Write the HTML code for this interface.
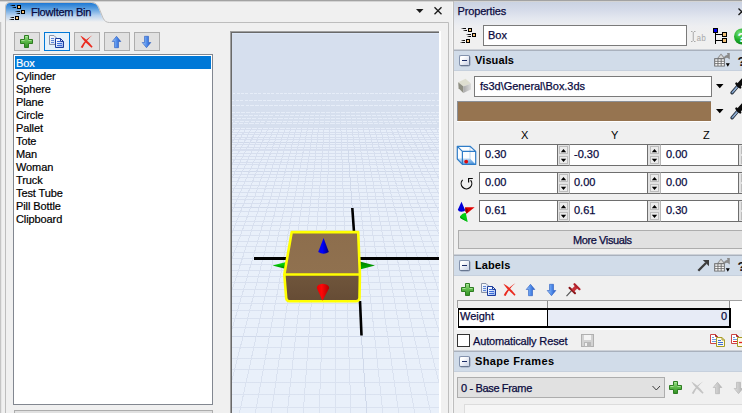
<!DOCTYPE html>
<html>
<head>
<meta charset="utf-8">
<title>FlowItem Bin</title>
<style>
html,body{margin:0;padding:0;}
body{width:742px;height:413px;overflow:hidden;position:relative;background:#f0f0f0;font-family:"Liberation Sans","DejaVu Sans",sans-serif;font-size:11px;color:#000;}
.abs{position:absolute;}
.t{position:absolute;white-space:nowrap;line-height:13px;height:13px;}
.nv{color:#0a0a3e;-webkit-text-stroke:0.25px #0a0a3e;}
/* buttons */
.tbtn{position:absolute;top:32px;width:24px;height:17px;border:1px solid #adadad;background:#e1e1e1;}
.tbtn.hot{border-color:#0078d7;background:#e5f1fb;}
/* list */
#list{left:13px;top:54px;width:198px;height:349px;border:1px solid #828790;background:#fff;}
#list div{position:absolute;left:1px;width:196px;height:13px;line-height:13px;white-space:nowrap;}
#list div span{position:absolute;left:1px;top:1px;letter-spacing:-0.1px;-webkit-text-stroke:0.2px currentColor;}
#list div.sel{background:#0078d7;color:#fff;}
#box2{left:14px;top:410px;width:197px;height:3px;border:1px solid #adadad;border-bottom:none;background:#e1e1e1;}
/* props */
#props{left:454px;top:2px;width:288px;height:411px;background:linear-gradient(#cad2e2 0,#d5dbe9 8px,#e3e7ef 16px,#edeef1 24px,#f0f0f0 31px,#f0f0f0 100%);}
.hdr{position:absolute;left:454px;width:288px;height:22px;background:#d1dce9;border-top:1px solid #a9b1bd;border-bottom:1px solid #c6d0dd;box-sizing:border-box;margin-top:1px;height:21px;box-shadow:0 -1px 0 #cdd1d7;}
.hdr b{position:absolute;left:21px;top:3px;font-size:11px;font-weight:bold;line-height:13px;white-space:nowrap;letter-spacing:0.1px;}
.minus{position:absolute;left:5px;top:4px;width:9px;height:9px;border:1px solid #8392ad;border-bottom-color:#66758f;border-right-color:#66758f;border-radius:2px;background:linear-gradient(135deg,#ffffff 25%,#c8d0e4);box-shadow:0.5px 0.5px 0 rgba(110,125,155,0.6);}
.minus i{position:absolute;left:2px;top:4px;width:5px;height:1px;background:#1c2c66;}
.inp{position:absolute;box-sizing:border-box;border:1px solid #6e6e6e;background:#fff;height:22px;white-space:nowrap;}
.inp span{position:absolute;left:5px;top:3px;line-height:13px;color:#0a0a3e;-webkit-text-stroke:0.25px #0a0a3e;}
.spin{position:absolute;width:9px;height:18px;}
.spin i{position:absolute;left:0;width:7px;height:6px;border:1px solid #bdbdbd;background:#ebebeb;}
</style>
</head>
<body>
<!-- window chrome lines -->
<div class="abs" style="left:0;top:0;width:742px;height:1px;background:#a2a2a2;"></div>
<div class="abs" style="left:0;top:1px;width:742px;height:1px;background:#d4d4d4;"></div>
<div class="abs" style="left:0;top:22px;width:1px;height:391px;background:#c4c4c4;"></div>
<div class="abs" style="left:1px;top:22px;width:1px;height:391px;background:#e6e6e6;"></div>
<div class="abs" style="left:452px;top:2px;width:1px;height:411px;background:#f6f6f6;"></div>
<div class="abs" style="left:453px;top:1px;width:1px;height:412px;background:#bebebe;"></div>

<!-- tab strip -->
<svg class="abs" style="left:0;top:0" width="453" height="413" viewBox="0 0 453 413">
  <defs>
    <linearGradient id="tg" x1="0" y1="3" x2="0" y2="22" gradientUnits="userSpaceOnUse">
      <stop offset="0" stop-color="#1d78d4"/>
      <stop offset="0.3" stop-color="#5a9fe0"/>
      <stop offset="0.65" stop-color="#b4d0ee"/>
      <stop offset="1" stop-color="#f0f0f0"/>
    </linearGradient>
  </defs>
  <path d="M6 22.500V7Q6 3 10 3H91.500Q96.500 3 98.500 8L102.500 18Q104.500 22.500 109.500 22.500Z" fill="url(#tg)"/>
  <path d="M5.500 413V7Q5.500 2.500 10 2.500H91.500Q97 2.500 99 8L103 18Q105 22.500 109.500 22.500H448.500V413" fill="none" stroke="#bdbdbd" stroke-width="1"/>
  <!-- tab icon -->
  <g shape-rendering="crispEdges">
    <rect x="17" y="5" width="4" height="4" fill="#000"/><rect x="18" y="6" width="2" height="2" fill="#f6c37a"/>
    <rect x="21" y="10" width="4" height="4" fill="#000"/><rect x="22" y="11" width="2" height="2" fill="#f6c37a"/>
    <rect x="15" y="16" width="4" height="4" fill="#000"/><rect x="16" y="17" width="2" height="2" fill="#f6c37a"/>
  </g>
  <defs><linearGradient id="mo" x1="0" y1="0" x2="1" y2="0"><stop offset="0" stop-color="#000" stop-opacity="0.1"/><stop offset="0.5" stop-color="#000" stop-opacity="0.9"/><stop offset="1" stop-color="#000"/></linearGradient></defs>
  <g fill="url(#mo)">
    <rect x="10" y="5" width="5" height="1"/><rect x="12" y="7" width="4" height="1"/>
    <rect x="15" y="11" width="5" height="1"/><rect x="16" y="13" width="4" height="1"/>
    <rect x="10" y="17" width="4" height="1"/><rect x="9" y="19" width="5" height="1"/>
  </g>
  <!-- panel menu arrow and close -->
  <path d="M416 9H423.500L419.750 13Z" fill="#1a1a1a"/>
  <path d="M434.500 7.200L441.500 14.200M441.500 7.200L434.500 14.200" stroke="#1a1a1a" stroke-width="1.300" fill="none"/>
</svg>
<div class="t nv" style="left:31px;top:6px;letter-spacing:-0.3px;">FlowItem Bin</div>

<!-- toolbar buttons -->
<div class="tbtn" style="left:14px"></div>
<div class="tbtn hot" style="left:44px"></div>
<div class="tbtn" style="left:74px"></div>
<div class="tbtn" style="left:104px"></div>
<div class="tbtn" style="left:134px"></div>

<!-- list -->
<div class="abs" id="list">
  <div class="sel" style="top:1px"><span>Box</span></div>
  <div style="top:14px"><span>Cylinder</span></div>
  <div style="top:27px"><span>Sphere</span></div>
  <div style="top:40px"><span>Plane</span></div>
  <div style="top:53px"><span>Circle</span></div>
  <div style="top:66px"><span>Pallet</span></div>
  <div style="top:79px"><span>Tote</span></div>
  <div style="top:92px"><span>Man</span></div>
  <div style="top:105px"><span>Woman</span></div>
  <div style="top:118px"><span>Truck</span></div>
  <div style="top:131px"><span>Test Tube</span></div>
  <div style="top:144px"><span>Pill Bottle</span></div>
  <div style="top:157px"><span>Clipboard</span></div>
</div>
<div class="abs" id="box2"></div>

<!-- 3D view frame -->
<div class="abs" style="left:230px;top:31px;width:211px;height:382px;background:#fff;"></div>
<div class="abs" style="left:230px;top:31px;width:209px;height:382px;background:#a0a0a0;"></div>
<div class="abs" style="left:231px;top:32px;width:208px;height:381px;background:#696969;"></div>
<svg class="abs" style="left:232px;top:33px" width="207" height="380" viewBox="232 33 207 380">
<defs><linearGradient id="floorg" x1="0" y1="92" x2="0" y2="413" gradientUnits="userSpaceOnUse"><stop offset="0" stop-color="#e7eef9"/><stop offset="0.4" stop-color="#e9f0fa"/><stop offset="1" stop-color="#e9f0fa"/></linearGradient></defs>
<defs><linearGradient id="lineg" x1="0" y1="128" x2="0" y2="413" gradientUnits="userSpaceOnUse"><stop offset="0" stop-color="#d6deee"/><stop offset="0.35" stop-color="#d8e0ef"/><stop offset="1" stop-color="#dae2f0"/></linearGradient></defs>
<rect x="232" y="33" width="207" height="380" fill="#d6dfee"/>
<rect x="232" y="33" width="207" height="1" fill="#dce6f6"/>
<rect x="232" y="128" width="207" height="285" fill="url(#floorg)"/>
<path d="M232 93h207v1h-207zM232 100h207v1h-207zM232 105h207v1h-207zM232 112h207v1h-207zM232 115h207v1h-207zM232 118h207v1h-207zM232 121h207v1h-207zM232 123h207v1h-207z" fill="#e6edf8" shape-rendering="crispEdges"/>
<path d="M232 129h207v1h-207zM232 132h207v1h-207zM232 134h207v1h-207zM232 137h207v1h-207zM232 139h207v1h-207zM232 142h207v1h-207zM232 144h207v1h-207zM232 147h207v1h-207zM232 149h207v2h-207zM232 153h207v1h-207zM232 156h207v1h-207zM232 159h207v1h-207zM232 162h207v1h-207zM232 164h207v1h-207zM232 168h207v1h-207zM232 171h207v1h-207zM232 174h207v1h-207zM232 177h207v1h-207zM232 181h207v1h-207zM232 185h207v1h-207zM232 188h207v1h-207zM232 192h207v1h-207zM232 196h207v1h-207zM232 199h207v1h-207zM232 203h207v1h-207zM232 207h207v1h-207zM232 211h207v1h-207zM232 216h207v1h-207zM232 221h207v1h-207zM232 225h207v1h-207zM232 230h207v1h-207zM232 235h207v1h-207zM232 241h207v1h-207zM232 246h207v1h-207zM232 252h207v1h-207zM232 258h207v1h-207zM232 264h207v1h-207zM232 270h207v1h-207zM232 276h207v1h-207zM232 282h207v1h-207zM232 289h207v1h-207zM232 296h207v1h-207zM232 303h207v1h-207zM232 310h207v1h-207zM232 318h207v1h-207zM232 327h207v1h-207zM232 336h207v1h-207zM232 347h207v1h-207zM232 358h207v1h-207zM232 369h207v1h-207zM232 382h207v1h-207zM232 394h207v1h-207zM232 407h207v1h-207z" fill="url(#lineg)" shape-rendering="crispEdges"/>
<path d="M232 142h207v1h-207zM232 171h207v1h-207zM232 207h207v1h-207zM232 336h207v1h-207z" fill="#d0d9ea" shape-rendering="crispEdges"/>
<path d="M235.1 128.0L48.1 413M240.7 128.0L64.0 413M246.2 128.0L80.0 413M251.8 128.0L95.9 413M257.4 128.0L111.9 413M262.9 128.0L127.8 413M268.5 128.0L143.7 413M274.1 128.0L159.7 413M279.7 128.0L175.6 413M285.2 128.0L191.6 413M290.8 128.0L207.5 413M296.4 128.0L223.5 413M301.9 128.0L239.4 413M307.5 128.0L255.3 413M313.1 128.0L271.3 413M318.6 128.0L287.2 413M324.2 128.0L303.2 413M329.8 128.0L319.1 413M335.3 128.0L335.1 413M340.9 128.0L351.0 413M346.5 128.0L366.9 413M352.1 128.0L382.9 413M357.6 128.0L398.8 413M363.2 128.0L414.8 413M368.8 128.0L430.7 413M374.3 128.0L446.7 413M379.9 128.0L462.6 413M385.5 128.0L478.6 413M391.0 128.0L494.5 413M396.6 128.0L510.4 413M402.2 128.0L526.4 413M407.7 128.0L542.3 413M413.3 128.0L558.3 413M418.9 128.0L574.2 413M424.5 128.0L590.2 413M430.0 128.0L606.1 413M435.6 128.0L622.0 413" stroke="url(#lineg)" stroke-width="1" fill="none" shape-rendering="crispEdges"/>
<path d="M233.2 92L201.7 128M237.4 92L207.3 128M241.7 92L212.8 128M245.9 92L218.4 128M250.2 92L224.0 128M254.5 92L229.5 128M258.7 92L235.1 128M263.0 92L240.7 128M267.2 92L246.2 128M271.5 92L251.8 128M275.8 92L257.4 128M280.0 92L262.9 128M284.3 92L268.5 128M288.5 92L274.1 128M292.8 92L279.7 128M297.1 92L285.2 128M301.3 92L290.8 128M305.6 92L296.4 128M309.8 92L301.9 128M314.1 92L307.5 128M318.3 92L313.1 128M322.6 92L318.6 128M326.9 92L324.2 128M331.1 92L329.8 128M335.4 92L335.3 128M339.6 92L340.9 128M343.9 92L346.5 128M348.2 92L352.1 128M352.4 92L357.6 128M356.7 92L363.2 128M360.9 92L368.8 128M365.2 92L374.3 128M369.5 92L379.9 128M373.7 92L385.5 128M378.0 92L391.0 128M382.2 92L396.6 128M386.5 92L402.2 128M390.7 92L407.7 128M395.0 92L413.3 128M399.3 92L418.9 128M403.5 92L424.5 128M407.8 92L430.0 128M412.0 92L435.6 128M416.3 92L441.2 128M420.6 92L446.7 128M424.8 92L452.3 128M429.1 92L457.9 128M433.3 92L463.4 128M437.6 92L469.0 128" stroke="#d6dfee" stroke-width="1" fill="none" shape-rendering="crispEdges"/>
<path d="M348.1 150L366.9 413" stroke="#d0d9ea" stroke-width="1" fill="none" shape-rendering="crispEdges"/>
<path d="M254 258.500H439" stroke="#000" stroke-width="3" fill="none"/>
<path d="M352.300 208L354 232M360 301L361.500 335.500" stroke="#000" stroke-width="2.600" fill="none"/>
<defs><linearGradient id="gcl" x1="0" y1="0" x2="0" y2="1"><stop offset="0" stop-color="#22e022"/><stop offset="0.45" stop-color="#00c800"/><stop offset="1" stop-color="#006400"/></linearGradient><linearGradient id="bcl" x1="0" y1="0" x2="1" y2="0"><stop offset="0" stop-color="#0808e0"/><stop offset="0.4" stop-color="#0000ff"/><stop offset="1" stop-color="#000078"/></linearGradient><linearGradient id="rcl" x1="0" y1="0" x2="1" y2="0"><stop offset="0" stop-color="#e80000"/><stop offset="0.4" stop-color="#ff0808"/><stop offset="1" stop-color="#b00000"/></linearGradient><linearGradient id="topf" x1="0" y1="0" x2="0" y2="1"><stop offset="0" stop-color="#8d6e4d"/><stop offset="1" stop-color="#90714f"/></linearGradient><linearGradient id="frontf" x1="0" y1="0" x2="0" y2="1"><stop offset="0" stop-color="#70563c"/><stop offset="1" stop-color="#664c35"/></linearGradient></defs>
<defs><linearGradient id="gcr" x1="0" y1="0" x2="0" y2="1"><stop offset="0" stop-color="#007800"/><stop offset="0.5" stop-color="#009a00"/><stop offset="1" stop-color="#00b400"/></linearGradient></defs>
<path d="M272.500 265.500L288 261.500V269.500Z" fill="url(#gcl)"/>
<path d="M375 265.500L358 261V270Z" fill="url(#gcr)"/>
<path d="M291.700 232.100H358.200L359.900 274.500H284.300Z" fill="url(#topf)"/>
<path d="M284.300 274.500H359.900L359.500 298Q359.300 301.200 356 301.200H289.500Q286.400 301.200 286.200 298Z" fill="url(#frontf)"/>
<path d="M291.700 232.100H358.200L359.900 274.500L359.500 298Q359.300 301.200 356 301.200H289.500Q286.400 301.200 286.200 298L284.300 274.500ZM284.300 274.500H359.900" stroke="#ffff00" stroke-width="2.600" fill="none" stroke-linejoin="round"/>
<path d="M323.600 238L318.200 252Q323.500 255.500 328.800 252Z" fill="url(#bcl)"/>
<path d="M322.500 300.800L316.800 288Q317 284.200 322.800 283.700Q328.800 284.200 329.200 288Z" fill="url(#rcl)"/>
</svg>

<!-- properties -->
<div class="abs" id="props"></div>
<div class="t nv" style="left:457.500px;top:5px;letter-spacing:-0.15px;">Properties</div>
<div class="inp" style="left:483px;top:25px;width:204px;height:21px;border-color:#7a7a7a;"><span style="top:3px;left:4px">Box</span></div>

<div class="hdr" style="top:49px"><span class="minus"><i></i></span><b>Visuals</b></div>
<div class="inp" style="left:474px;top:76px;width:238px;height:21px;border-color:#7a7a7a;"><span style="top:3px;left:5px;letter-spacing:-0.04px;">fs3d\General\Box.3ds</span></div>
<div class="abs" style="left:457px;top:101px;width:254px;height:20px;background:#967450;box-sizing:border-box;border-left:1px solid #8b8f96;border-top:1px solid #8b8f96;box-shadow:0 1px 0 #fff;"></div>

<div class="t" style="left:521px;top:129px;">X</div>
<div class="t" style="left:611px;top:129px;">Y</div>
<div class="t" style="left:703px;top:129px;">Z</div>

<div class="abs" style="left:479px;top:144px;width:263px;height:22px;background:#e2e2e2;border-top:1px solid #6e6e6e;border-bottom:1px solid #6e6e6e;box-sizing:border-box;"></div>
<div class="inp" style="left:479px;top:144px;width:79px;"><span style="left:5px">0.30</span></div>
<div class="inp" style="left:569px;top:144px;width:79px;border-left-color:#b8b8b8;"><span style="left:4px">-0.30</span></div>
<div class="inp" style="left:660px;top:144px;width:79px;border-left-color:#b8b8b8;"><span style="left:5px">0.00</span></div>
<div class="spin" style="left:559px;top:146px;"><i style="top:0"></i><i style="top:10px"></i></div>
<div class="spin" style="left:650px;top:146px;"><i style="top:0"></i><i style="top:10px"></i></div>
<div class="spin" style="left:741px;top:146px;"><i style="top:0"></i><i style="top:10px"></i></div>
<div class="abs" style="left:479px;top:172px;width:263px;height:22px;background:#e2e2e2;border-top:1px solid #6e6e6e;border-bottom:1px solid #6e6e6e;box-sizing:border-box;"></div>
<div class="inp" style="left:479px;top:172px;width:79px;"><span style="left:5px">0.00</span></div>
<div class="inp" style="left:569px;top:172px;width:79px;border-left-color:#b8b8b8;"><span style="left:4px">0.00</span></div>
<div class="inp" style="left:660px;top:172px;width:79px;border-left-color:#b8b8b8;"><span style="left:5px">0.00</span></div>
<div class="spin" style="left:559px;top:174px;"><i style="top:0"></i><i style="top:10px"></i></div>
<div class="spin" style="left:650px;top:174px;"><i style="top:0"></i><i style="top:10px"></i></div>
<div class="spin" style="left:741px;top:174px;"><i style="top:0"></i><i style="top:10px"></i></div>
<div class="abs" style="left:479px;top:200px;width:263px;height:22px;background:#e2e2e2;border-top:1px solid #6e6e6e;border-bottom:1px solid #6e6e6e;box-sizing:border-box;"></div>
<div class="inp" style="left:479px;top:200px;width:79px;"><span style="left:5px">0.61</span></div>
<div class="inp" style="left:569px;top:200px;width:79px;border-left-color:#b8b8b8;"><span style="left:4px">0.61</span></div>
<div class="inp" style="left:660px;top:200px;width:79px;border-left-color:#b8b8b8;"><span style="left:5px">0.30</span></div>
<div class="spin" style="left:559px;top:202px;"><i style="top:0"></i><i style="top:10px"></i></div>
<div class="spin" style="left:650px;top:202px;"><i style="top:0"></i><i style="top:10px"></i></div>
<div class="spin" style="left:741px;top:202px;"><i style="top:0"></i><i style="top:10px"></i></div>

<div class="abs" style="left:458px;top:230px;width:290px;height:19px;border:1px solid #adadad;background:#e1e1e1;box-sizing:border-box;"><span class="t nv" style="left:114px;top:3px;letter-spacing:-0.4px;">More Visuals</span></div>

<div class="hdr" style="top:254px"><span class="minus"><i></i></span><b>Labels</b></div>

<!-- labels table -->
<div class="abs" style="left:457px;top:300px;width:285px;height:30px;background:#fff;"></div>
<div class="abs" style="left:457px;top:300px;width:285px;height:1px;background:#a0a0a0;"></div>
<div class="abs" style="left:457px;top:301px;width:273px;height:7px;background:#f0f0f0;border-right:1px solid #8c8c8c;border-left:1px solid #a0a0a0;box-sizing:border-box;"></div>
<div class="abs" style="left:547px;top:301px;width:1px;height:7px;background:#8c8c8c;"></div>
<div class="abs" style="left:458px;top:308px;width:273px;height:20px;background:#000;"></div>
<div class="abs" style="left:459px;top:310px;width:88px;height:16px;background:#fff;"></div>
<div class="abs" style="left:548px;top:310px;width:181px;height:16px;background:#e7ebf6;"></div>
<div class="t nv" style="left:460px;top:310px;">Weight</div>
<div class="t nv" style="left:721px;top:310px;">0</div>

<div class="abs" style="left:457px;top:334px;width:11px;height:11px;border:1px solid #333;background:#fff;"></div>
<div class="t nv" style="left:473px;top:335px;letter-spacing:-0.15px;">Automatically Reset</div>

<div class="hdr" style="top:350px"><span class="minus"><i></i></span><b style="letter-spacing:0.35px;">Shape Frames</b></div>

<div class="abs" style="left:457px;top:377px;width:208px;height:21px;border:1px solid #adadad;background:#e1e1e1;box-sizing:border-box;"><span class="t nv" style="left:3px;top:4px;letter-spacing:-0.35px;">0 - Base Frame</span></div>
<div class="abs" style="left:464px;top:404px;width:290px;height:12px;border:1px solid #dcdcdc;background:#f6f6f6;"></div>

<!-- icon overlay -->
<svg class="abs" style="left:0;top:0" width="742" height="413" viewBox="0 0 742 413">
<defs>
  <linearGradient id="gp" x1="0" y1="0" x2="0" y2="1"><stop offset="0" stop-color="#9be08a"/><stop offset="0.5" stop-color="#5cb848"/><stop offset="1" stop-color="#2f8f22"/></linearGradient>
  <linearGradient id="ba" x1="0" y1="0" x2="1" y2="0"><stop offset="0" stop-color="#a8caf8"/><stop offset="0.45" stop-color="#5a95ee"/><stop offset="1" stop-color="#1f55c8"/></linearGradient>
  <linearGradient id="ga" x1="0" y1="0" x2="1" y2="0"><stop offset="0" stop-color="#e0e0e0"/><stop offset="1" stop-color="#b4b4b4"/></linearGradient>
  <linearGradient id="pg1" x1="0" y1="0" x2="1" y2="1"><stop offset="0" stop-color="#ffffff"/><stop offset="1" stop-color="#c9d6ee"/></linearGradient>
  <linearGradient id="pg2" x1="0" y1="0" x2="1" y2="1"><stop offset="0" stop-color="#ffffff"/><stop offset="0.4" stop-color="#e8f0ff"/><stop offset="1" stop-color="#7ea4ea"/></linearGradient>
  <!-- 13x13 plus -->
  <symbol id="plus" viewBox="0 0 13 13" overflow="visible">
    <path d="M4.500 0.500H8.500V4.500H12.500V8.500H8.500V12.500H4.500V8.500H0.500V4.500H4.500Z" fill="url(#gp)" stroke="#2e7d22" stroke-width="1" stroke-linejoin="round"/>
    <path d="M5.500 1.500H7.500M1.500 5.500H4.500M8.500 5.500H11.500" stroke="#b8eaa8" stroke-width="1" fill="none" opacity="0.8"/>
  </symbol>
  <!-- 15x13 copy pages -->
  <symbol id="copy" viewBox="0 0 15 13" overflow="visible">
    <path d="M0.500 0.500H5L7.500 3V9.500H0.500Z" fill="url(#pg1)" stroke="#8a93a8" stroke-width="1"/>
    <path d="M2 3.500H5M2 5.500H5M2 7.500H5" stroke="#5d86d8" stroke-width="1"/>
    <path d="M6.500 3.500H11.500L14.500 6.500V12.500H6.500Z" fill="url(#pg2)" stroke="#1c3c9c" stroke-width="1"/>
    <path d="M11.500 3.500V6.500H14.500" fill="none" stroke="#1c3c9c" stroke-width="1"/>
    <path d="M8 6.500H11M8 8.500H13M8 10.500H13" stroke="#3c6cd8" stroke-width="1"/>
  </symbol>
  <!-- 13x13 X -->
  <symbol id="xx" viewBox="0 0 13 13" overflow="visible">
    <path d="M0.400 0.700C3.500 1.800 8.200 6.200 12.600 11.700L11.500 12.800C7 8.800 3 5 0.400 0.700Z"/>
    <path d="M12.500 0.200C9 2.800 5.200 7.500 2.600 13L0.700 12.300C3.800 6.300 8.500 2.300 12.500 0.200Z"/>
  </symbol>
  <!-- 9x12 arrows -->
  <symbol id="up" viewBox="0 0 9 12" overflow="visible">
    <path d="M4.500 0.300L8.800 5.500H6.500V11.700H2.500V5.500H0.200Z"/>
  </symbol>
  <symbol id="dn" viewBox="0 0 9 12" overflow="visible">
    <path d="M4.500 11.700L8.800 6.500H6.500V0.300H2.500V6.500H0.200Z"/>
  </symbol>
  <!-- flowitem icon, origin at first square (17,5) -->
  <symbol id="fi" viewBox="0 0 16 16" overflow="visible">
    <g shape-rendering="crispEdges">
    <rect x="8" y="0" width="4" height="4" fill="#000"/><rect x="9" y="1" width="2" height="2" fill="#f6c37a"/>
    <rect x="12" y="5" width="4" height="4" fill="#000"/><rect x="13" y="6" width="2" height="2" fill="#f6c37a"/>
    <rect x="6" y="11" width="4" height="4" fill="#000"/><rect x="7" y="12" width="2" height="2" fill="#f6c37a"/>
    </g>
    <g fill="url(#mo2)">
    <rect x="1" y="0" width="5" height="1"/><rect x="3" y="2" width="4" height="1"/>
    <rect x="6" y="6" width="5" height="1"/><rect x="7" y="8" width="4" height="1"/>
    <rect x="1" y="12" width="4" height="1"/><rect x="0" y="14" width="5" height="1"/>
    </g>
  </symbol>
  <linearGradient id="mo2" x1="0" y1="0" x2="1" y2="0"><stop offset="0" stop-color="#000" stop-opacity="0.1"/><stop offset="0.5" stop-color="#000" stop-opacity="0.9"/><stop offset="1" stop-color="#000"/></linearGradient>
  <!-- table icon 16x14 -->
  <symbol id="tbl" viewBox="0 0 16 14" overflow="visible">
    <path d="M3 5.500L7 0.500L10 4Q12 1.500 13.500 2L13 0H15.800V6.500L13.800 5Q12.500 4.200 11 5.500Z" fill="#8a8a8a"/>
    <path d="M4.500 5L7 1.800L9.500 5Z" fill="#d8d8d8"/>
    <rect x="0.200" y="5.200" width="10.600" height="8.300" fill="#6a6a6a"/>
    <g fill="#fff"><rect x="1.200" y="6.300" width="2.300" height="1.500"/><rect x="4.400" y="6.300" width="2.300" height="1.500"/><rect x="7.600" y="6.300" width="2.300" height="1.500"/>
    <rect x="1.200" y="8.700" width="2.300" height="1.500"/><rect x="4.400" y="8.700" width="2.300" height="1.500"/><rect x="7.600" y="8.700" width="2.300" height="1.500"/>
    <rect x="1.200" y="11.100" width="2.300" height="1.500"/><rect x="4.400" y="11.100" width="2.300" height="1.500"/><rect x="7.600" y="11.100" width="2.300" height="1.500"/></g>
    <path d="M11.800 10.300H15.800L13.800 13.800Z" fill="#000"/>
  </symbol>
  <!-- eyedropper 11x14, tip at (0,13.5) -->
  <symbol id="eye" viewBox="0 0 11 14" overflow="visible">
    <path d="M1 12.800L6.800 6" stroke="#2c3644" stroke-width="3.400" stroke-linecap="round" fill="none"/>
    <path d="M1.300 12.400L6.600 6.200" stroke="#7fa2cc" stroke-width="1.500" stroke-linecap="round" fill="none"/>
    <path d="M2.600 11.600L6.200 7.400" stroke="#b8cce4" stroke-width="0.600" fill="none"/>
    <path d="M5.400 3.600L9.200 7.400" stroke="#0c0c0c" stroke-width="2.400" stroke-linecap="round" fill="none"/>
    <path d="M8 5L12.500 0" stroke="#0c0c0c" stroke-width="4.800" stroke-linecap="round" fill="none"/>
  </symbol>
</defs>

<!-- toolbar icons -->
<use href="#plus" x="20" y="35" width="13" height="13"/>
<use href="#copy" x="49" y="35" width="15" height="13"/>
<use href="#xx" x="80" y="35" width="13" height="13" fill="#ea2a1e"/>
<use href="#up" x="112" y="36" width="9" height="12" fill="url(#ba)" stroke="#2a5cc0" stroke-width="0.600"/>
<use href="#dn" x="142" y="36" width="9" height="12" fill="url(#ba)" stroke="#2a5cc0" stroke-width="0.600"/>

<!-- properties: name row -->
<use href="#fi" x="460" y="28" width="16" height="16"/>
<g stroke="#a8a8a8" stroke-width="1" fill="none">
  <path d="M691 31.500H692.500M694 31.500H695.500M691 41.500H692.500M694 41.500H695.500M693.250 32V41"/>
</g>
<text x="696.500" y="40.500" font-family="Liberation Mono, monospace" font-size="9" fill="#a8a8a8" textLength="9.500" lengthAdjust="spacingAndGlyphs">ab</text>
<g shape-rendering="crispEdges">
  <rect x="713" y="28" width="5" height="5" fill="#000"/><rect x="714" y="29" width="3" height="3" fill="#0000f0"/>
  <rect x="715" y="33" width="1" height="11" fill="#000"/>
  <rect x="716" y="34" width="6" height="1" fill="#000"/><rect x="716" y="40" width="6" height="1" fill="#000"/>
  <rect x="722" y="32" width="5" height="5" fill="#000"/><rect x="723" y="33" width="3" height="3" fill="#f0c078"/>
  <rect x="722" y="38" width="5" height="5" fill="#000"/><rect x="723" y="39" width="3" height="3" fill="#f0c078"/>
</g>
<defs><radialGradient id="qg" cx="0.35" cy="0.3" r="0.8"><stop offset="0" stop-color="#7be07b"/><stop offset="0.5" stop-color="#1fb02a"/><stop offset="1" stop-color="#0a7a14"/></radialGradient></defs>
<circle cx="742" cy="36.500" r="8" fill="url(#qg)"/>
<text x="737.500" y="41.500" font-family="Liberation Sans, sans-serif" font-weight="bold" font-size="13" fill="#fff">?</text>
<path d="M738.500 8.500L745 15M745 8.500L738.500 15" stroke="#1a1a1a" stroke-width="1.300" fill="none"/>

<!-- header icons -->
<use href="#tbl" x="714" y="53" width="16" height="14"/>
<text x="737.500" y="65.500" font-family="Liberation Sans, sans-serif" font-weight="bold" font-size="13" fill="#111">?</text>
<use href="#tbl" x="714" y="258" width="16" height="14"/>
<text x="737.500" y="270.500" font-family="Liberation Sans, sans-serif" font-weight="bold" font-size="13" fill="#111">?</text>
<path d="M698.300 270.700L706 263" stroke="#3c3c3c" stroke-width="2.300" fill="none"/><path d="M702.800 260H709V266.200Z" fill="#3c3c3c"/>

<!-- shape cube icon -->
<path d="M458.200 82.300L465.500 78.800L471 83.500L463.500 86.600Z" fill="#deded0"/>
<path d="M458.200 82.300L463.500 86.600L463.300 93L458.600 88.200Z" fill="#8e8e82"/>
<defs><linearGradient id="cg" x1="0" y1="0" x2="1" y2="0"><stop offset="0" stop-color="#a8a8a8"/><stop offset="1" stop-color="#dcdcdc"/></linearGradient></defs>
<path d="M463.500 86.600L471 83.500L471 89.400L463.300 93Z" fill="url(#cg)"/>

<!-- dropdown triangles + eyedroppers -->
<path d="M716 84H723.500L719.750 88.300Z" fill="#000"/>
<path d="M716 109H723.500L719.750 113.300Z" fill="#000"/>
<use href="#eye" x="731" y="80" width="11" height="14"/>
<use href="#eye" x="731" y="105" width="11" height="14"/>

<!-- row icons -->
<defs><linearGradient id="cubef" x1="0" y1="0" x2="1" y2="1"><stop offset="0" stop-color="#cfe4f8"/><stop offset="1" stop-color="#3d8bd8"/></linearGradient></defs>
<g>
  <path d="M457.300 146.300H470L475.700 151.400V164.400H462.400L457.300 159Z" fill="#fbfdff"/>
  <path d="M457.300 159H470L475.700 164.400H462.400Z" fill="url(#cubef)"/>
  <path d="M470 146.800V159H457.800" fill="none" stroke="#b9d6f2" stroke-width="1"/>
  <path d="M470 159L475.500 164.200" fill="none" stroke="#8fbdea" stroke-width="0.800"/>
  <path d="M457.300 146.300H470L475.700 151.400V164.400H462.400L457.300 159ZM457.300 146.300L462.400 151.400H475.700M462.400 151.400V164.400" fill="none" stroke="#2e7cc8" stroke-width="1.200" stroke-linejoin="round"/>
  <circle cx="466.200" cy="161.600" r="1.900" fill="#dc0a0a"/>
</g>
<g fill="none" stroke="#0a0a0a" stroke-width="1.200">
  <path d="M462.600 179.900A5.300 5.300 0 1 0 470.600 180.200"/>
  <path d="M472.800 178.500H468.600V182.400"/>
</g>
<g>
  <path d="M461.500 201.700L457.800 209.800Q458.500 211.800 461.500 211.700Q464.800 211.700 465.100 210Z" fill="#0000d8"/>
  <path d="M474.600 207.300H465.200Q464.800 211 466.600 213.800Z" fill="#e00000"/>
  <path d="M465.200 207.300Q464.800 211 466.600 213.800L468.500 210Z" fill="#9a0000"/>
  <path d="M467.700 222L465.800 213Q463 212.300 460.300 216Q459.600 217.800 461 218.500Z" fill="#00d010"/>
  <path d="M467.700 222L461 218.500Q459.600 217.800 460.300 216Z" fill="#00a010"/>
</g>

<!-- labels toolbar -->
<use href="#plus" x="461" y="283" width="13" height="13"/>
<use href="#copy" x="481" y="283" width="15" height="13"/>
<use href="#xx" x="503" y="283" width="13" height="13" fill="#ea2a1e"/>
<use href="#up" x="526" y="284" width="9" height="12" fill="url(#ba)" stroke="#2a5cc0" stroke-width="0.600"/>
<use href="#dn" x="547" y="284" width="9" height="12" fill="url(#ba)" stroke="#2a5cc0" stroke-width="0.600"/>
<g transform="translate(0 0.700)">
  <path d="M566.500 295.500L572 289.500" stroke="#555" stroke-width="1.200" fill="none"/>
  <path d="M569.500 287L575 292.500" stroke="#8a1418" stroke-width="2" stroke-linecap="round" fill="none"/>
  <path d="M571.500 288.500L575.500 284.500L578 287L574 291Z" fill="#c8323a"/>
  <path d="M574.500 283.500L579.500 288.500" stroke="#b0202a" stroke-width="2.200" stroke-linecap="round" fill="none"/>
</g>

<!-- save icon (disabled) -->
<g>
  <rect x="581.500" y="334.500" width="12" height="12" fill="#d2d2d2" stroke="#b0b0b0" stroke-width="1"/>
  <rect x="584" y="335" width="7" height="5" fill="#f4f4f4"/>
  <rect x="584" y="342" width="7" height="4.500" fill="#b8b8b8"/>
  <rect x="585" y="343" width="2" height="3" fill="#f0f0f0"/>
</g>
<!-- copy icons bottom right -->
<g>
  <path d="M710.500 334.500H715.500L717.500 336.500V343.500H710.500Z" fill="#fff" stroke="#cc4444" stroke-width="1"/>
  <path d="M715.500 334.500V336.500H717.500" fill="none" stroke="#a02828" stroke-width="1"/>
  <path d="M712 337.500H714M712 339.500H716M712 341.500H716" stroke="#6a9ae0" stroke-width="1"/>
  <path d="M716.500 337.500H722L724.500 340V346.500H716.500Z" fill="#fdfbe6" stroke="#a89a24" stroke-width="1"/>
  <path d="M722 337.500V340H724.500" fill="none" stroke="#a89a24" stroke-width="1"/>
  <path d="M718 340.500H721M718 342.500H723M718 344.500H723" stroke="#3c6cd8" stroke-width="1"/>
  <path d="M731.500 334.500H736.500L738.500 336.500V343.500H731.500Z" fill="#fff" stroke="#cc4444" stroke-width="1"/>
  <path d="M736.500 334.500V336.500H738.500" fill="none" stroke="#a02828" stroke-width="1"/>
  <path d="M733 337.500H735M733 339.500H737" stroke="#6a9ae0" stroke-width="1"/>
  <path d="M733 341.500H737" stroke="#e02020" stroke-width="1"/>
  <path d="M737.500 337.500H743V346.500H737.500Z" fill="#fdfbe6" stroke="#a89a24" stroke-width="1"/>
  <path d="M739 342.500H743" stroke="#e02020" stroke-width="1.300"/>
</g>

<!-- shape frames row -->
<path d="M652.500 386L656.300 390L660 386" fill="none" stroke="#3c3c3c" stroke-width="1"/>
<use href="#plus" x="669" y="381" width="13" height="13"/>
<use href="#xx" x="691" y="381" width="13" height="13" fill="#c4c4c4"/>
<use href="#up" x="713" y="382" width="9" height="12" fill="url(#ga)" stroke="#b0b0b0" stroke-width="0.600"/>
<use href="#dn" x="734" y="382" width="9" height="12" fill="url(#ga)" stroke="#b0b0b0" stroke-width="0.600"/>

<!-- spinner arrows -->
<path d="M560.8 152.2H566.2L563.5 149ZM560.8 158.8H566.2L563.5 162Z" fill="#000"/>
<path d="M651.8 152.2H657.2L654.5 149ZM651.8 158.8H657.2L654.5 162Z" fill="#000"/>
<path d="M560.8 180.2H566.2L563.5 177ZM560.8 186.8H566.2L563.5 190Z" fill="#000"/>
<path d="M651.8 180.2H657.2L654.5 177ZM651.8 186.8H657.2L654.5 190Z" fill="#000"/>
<path d="M560.8 208.2H566.2L563.5 205ZM560.8 214.8H566.2L563.5 218Z" fill="#000"/>
<path d="M651.8 208.2H657.2L654.5 205ZM651.8 214.8H657.2L654.5 218Z" fill="#000"/>

</svg>
</body>
</html>
